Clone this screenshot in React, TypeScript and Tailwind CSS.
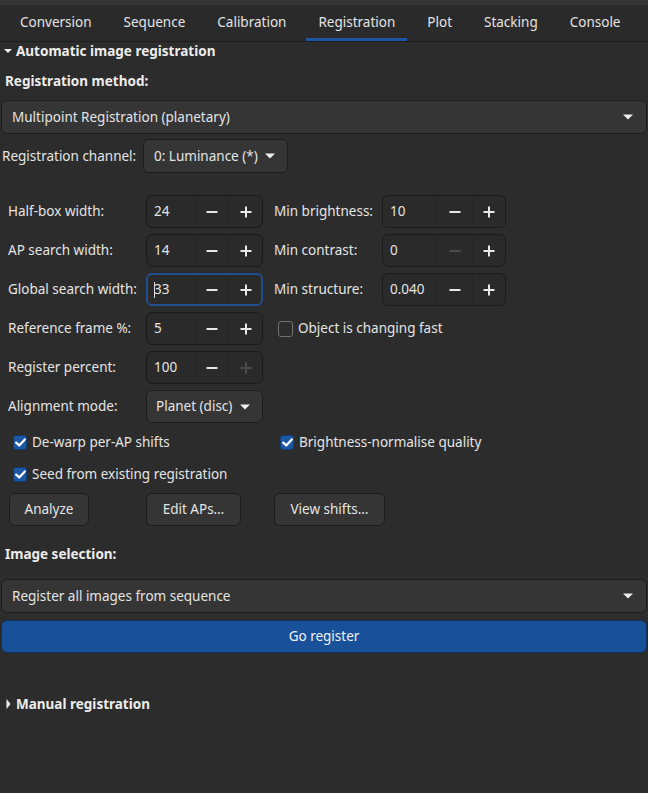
import React from 'react';

const TABS = ['Conversion', 'Sequence', 'Calibration', 'Registration', 'Plot', 'Stacking', 'Console'];

const Caret = ({ className = '' }: { className?: string }) => (
  <svg width="10" height="6" viewBox="0 0 10 6" className={className}>
    <path d="M0 0.5 L10 0.5 L5 5.5 Z" fill="#f0f0f0" />
  </svg>
);

const Minus = ({ disabled }: { disabled?: boolean }) => (
  <svg width="12" height="12" viewBox="0 0 12 12">
    <rect x="0.5" y="5" width="11" height="2" fill={disabled ? '#4a4a4a' : '#e8e8e8'} />
  </svg>
);

const Plus = ({ disabled }: { disabled?: boolean }) => (
  <svg width="12" height="12" viewBox="0 0 12 12">
    <rect x="0.5" y="5" width="11" height="2" fill={disabled ? '#4a4a4a' : '#e8e8e8'} />
    <rect x="5" y="0.5" width="2" height="11" fill={disabled ? '#4a4a4a' : '#e8e8e8'} />
  </svg>
);

interface SpinProps {
  value: string;
  entryWidth: string;
  focused?: boolean;
  minusDisabled?: boolean;
  plusDisabled?: boolean;
}

const Spin = ({ value, entryWidth, focused, minusDisabled, plusDisabled }: SpinProps) => (
  <div
    className={`flex h-[33px] rounded-[6px] bg-[#2a2a2a] ${
      focused ? 'border-2 border-[#1f4f8e]' : 'border border-[#1b1b1b]'
    }`}
  >
    <div className={`${entryWidth} flex items-center ${focused ? 'pl-[6px]' : 'pl-[7px]'}`}>
      {focused && <span className="w-px h-[16px] bg-[#dcdcdc] -mr-px" />}
      <span>{value}</span>
    </div>
    <div className="w-[35px] flex items-center justify-center border-l border-[#252525]">
      <Minus disabled={minusDisabled} />
    </div>
    <div className="flex-1 flex items-center justify-center border-l border-[#252525]">
      <Plus disabled={plusDisabled} />
    </div>
  </div>
);

const Check = ({ checked }: { checked?: boolean }) =>
  checked ? (
    <span className="w-[14px] h-[15px] rounded-[3px] bg-[#1c57a6] border border-[#123b72] flex items-center justify-center">
      <svg width="11" height="9" viewBox="0 0 11 9">
        <path d="M1.2 4.6 L4.2 7.4 L9.8 1.4" stroke="#ffffff" strokeWidth="2.2" fill="none" strokeLinecap="round" strokeLinejoin="round" />
      </svg>
    </span>
  ) : (
    <span className="w-[15px] h-[16px] rounded-[3px] border border-[#707070] bg-[#2c2c2c]" />
  );

const Combo = ({ label, className = '' }: { label: string; className?: string }) => (
  <div
    className={`flex items-center justify-between h-[34px] rounded-[6px] bg-[#353535] border border-[#1d1d1d] ${className}`}
  >
    <span>{label}</span>
    <Caret />
  </div>
);

export default function App() {
  return (
    <div className="w-[648px] h-[793px] bg-[#2c2c2c] text-[13.5px] text-[#e4e4e4] font-['Noto_Sans',sans-serif] overflow-hidden">
      <div className="h-[5px] bg-[#353535]" />
      <div className="flex h-[37px] pl-[4px] bg-[#2a2a2a] border-b border-[#1c1c1c]">
        {TABS.map((t) => (
          <div key={t} className="relative flex items-center px-4 pb-[1px]">
            {t}
            {t === 'Registration' && (
              <span className="absolute left-1 right-1 bottom-0 h-[3px] bg-[#1c56a4]" />
            )}
          </div>
        ))}
      </div>

      {/* Automatic registration */}
      <div className="mt-[1px] flex items-center h-[16px] pl-[4px] gap-[4px] font-bold text-[#ececec]">
        <Caret className="w-[8px]" />
        <span>Automatic image registration</span>
      </div>

      <div className="mt-[12px] h-[20px] flex items-center pl-[5px] font-bold text-[#ececec]">
        Registration method:
      </div>

      <div className="mt-[9px] px-[1px]">
        <Combo label="Multipoint Registration (planetary)" className="pl-[10px] pr-[13px]" />
      </div>

      <div className="mt-[5px] flex items-center pl-[2px]">
        <span className="w-[141px]">Registration channel:</span>
        <Combo label="0: Luminance (*)" className="w-[145px] pl-[10px] pr-[12px]" />
      </div>

      {/* Spin grid */}
      <div className="mt-[22px] pl-[8px] grid grid-cols-[138px_128px_108px_124px] auto-rows-[33px] gap-y-[6px] items-center">
        <span>Half-box width:</span>
        <div className="w-[117px]"><Spin value="24" entryWidth="w-[47px]" /></div>
        <span>Min brightness:</span>
        <Spin value="10" entryWidth="w-[54px]" />

        <span>AP search width:</span>
        <div className="w-[117px]"><Spin value="14" entryWidth="w-[47px]" /></div>
        <span>Min contrast:</span>
        <Spin value="0" entryWidth="w-[54px]" minusDisabled />

        <span>Global search width:</span>
        <div className="w-[117px]"><Spin value="33" entryWidth="w-[46px]" focused /></div>
        <span>Min structure:</span>
        <Spin value="0.040" entryWidth="w-[54px]" />

        <span>Reference frame %:</span>
        <div className="w-[117px]"><Spin value="5" entryWidth="w-[47px]" /></div>
        <label className="col-span-2 flex items-center gap-[5px] pl-[4px]">
          <Check />
          <span>Object is changing fast</span>
        </label>

        <span>Register percent:</span>
        <div className="w-[117px]"><Spin value="100" entryWidth="w-[47px]" plusDisabled /></div>
        <span />
        <span />

        <span>Alignment mode:</span>
        <div className="w-[117px]">
          <div className="flex items-center justify-between h-[33px] rounded-[6px] bg-[#353535] border border-[#1d1d1d] pl-[9px] pr-[12px]">
            <span>Planet (disc)</span>
            <Caret />
          </div>
        </div>
      </div>

      {/* Check options */}
      <div className="mt-[9px] pl-[8px] grid grid-cols-[266px_1fr] auto-rows-[20px] gap-y-[12px] items-center">
        <label className="flex items-center gap-[5px] pl-[5px]">
          <Check checked />
          <span>De-warp per-AP shifts</span>
        </label>
        <label className="flex items-center gap-[5px] pl-[6px]">
          <Check checked />
          <span>Brightness-normalise quality</span>
        </label>
        <label className="flex items-center gap-[5px] pl-[5px]">
          <Check checked />
          <span>Seed from existing registration</span>
        </label>
      </div>

      <div className="mt-[9px] pl-[9px] grid grid-cols-[137px_128px_auto] items-center">
        <button className="w-[80px] h-[33px] rounded-[6px] bg-[#353535] border border-[#1d1d1d]">Analyze</button>
        <button className="w-[95px] h-[33px] rounded-[6px] bg-[#353535] border border-[#1d1d1d]">Edit APs…</button>
        <button className="w-[111px] h-[33px] rounded-[6px] bg-[#353535] border border-[#1d1d1d]">View shifts…</button>
      </div>

      <div className="mt-[18px] h-[20px] flex items-center pl-[5px] font-bold text-[#ececec]">
        Image selection:
      </div>

      <div className="mt-[15px] px-[1px]">
        <Combo label="Register all images from sequence" className="pl-[10px] pr-[13px]" />
      </div>

      <div className="mt-[7px] px-[1px]">
        <button className="w-full h-[33px] rounded-[6px] bg-[#18509a] border border-[#0f2f5c] text-[#f0f0f0]">
          Go register
        </button>
      </div>

      <div className="mt-[43px] flex items-center h-[16px] pl-[6px] gap-[5px] font-bold text-[#ececec]">
        <svg width="5" height="10" viewBox="0 0 5 10">
          <path d="M0.5 0 L4.5 5 L0.5 10 Z" fill="#f0f0f0" />
        </svg>
        <span>Manual registration</span>
      </div>
    </div>
  );
}
